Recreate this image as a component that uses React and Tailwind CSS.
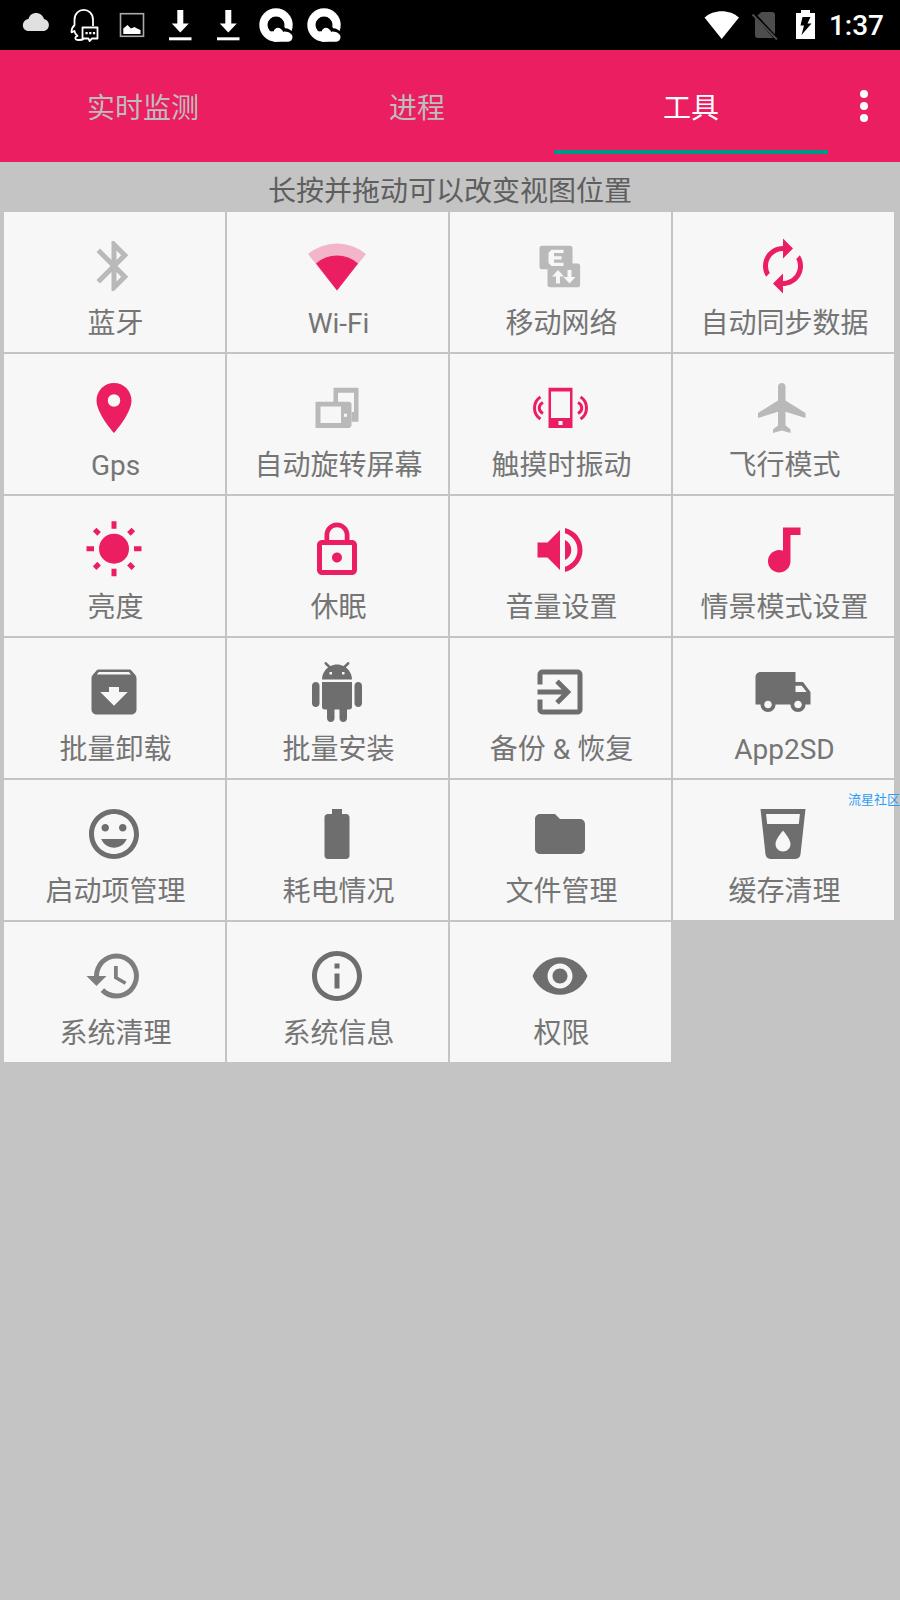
import {
  MdArchive,
  MdAudiotrack,
  MdAutorenew,
  MdBatteryFull,
  MdBluetooth,
  MdExitToApp,
  MdFolder,
  MdHistory,
  MdInfoOutline,
  MdLocalDrink,
  MdLocalShipping,
  MdLockOutline,
  MdMood,
  MdPlace,
  MdVisibility,
  MdVolumeUp,
} from "react-icons/md";

function WifiIcon({ className }) {
  return (
    <svg viewBox="0 0 60 60" fill="currentColor" className={className}>
      <path d="M30 54.5 1 18A45.3 45.3 0 0 1 59 18z" opacity="0.3" />
      <path d="M30 54.5 9 27.5A31.6 31.6 0 0 1 51 27.5z" />
    </svg>
  );
}

function MobileDataIcon({ className }) {
  return (
    <svg viewBox="0 0 60 60" fill="currentColor" className={className}>
      <rect x="9.5" y="9.7" width="33" height="23.6" rx="2.5" />
      <rect x="17.5" y="27.5" width="32.6" height="23.7" rx="2.5" />
      <g fill="#f7f7f7">
        <path d="M21.5 13.7h12v3.2H24v3.3h7.5v3.3H24v3.3h9.5v3.2h-12l-3-3V16.7z" />
        <path d="M28 34l6 6.5h-4v7h-4v-7h-4z" />
        <path d="M39.5 47.5l-6-6.5h4v-7h4v7h4z" />
      </g>
    </svg>
  );
}

function RotateIcon({ className }) {
  return (
    <svg viewBox="0 0 60 60" fill="currentColor" fillRule="evenodd" className={className}>
      <path d="M26.5 9.7h25v34h-7V34h2.5V14.7H31v10h-4.5z" />
      <path d="M8.5 23.7h34l2 1.5V48l-2 2h-34zM13.5 28.5V45H34V28.5zM37 35.8v3h3v-3z" />
    </svg>
  );
}

function VibrateIcon({ className }) {
  return (
    <svg viewBox="0 0 60 60" fill="currentColor" className={className}>
      <path fillRule="evenodd" d="M18.5 9.7h24V50h-24zM21 13.4V40h19V13.4zM28.5 43v4h4v-4z" />
      <g fill="none" stroke="currentColor" strokeWidth="3">
        <path d="M13 24.5c-5 2.5-5 8.5 0 11" />
        <path d="M10.5 19c-8 5-8 17 0 22" />
        <path d="M48 24.5c5 2.5 5 8.5 0 11" />
        <path d="M50.5 19c8 5 8 17 0 22" />
      </g>
    </svg>
  );
}

function PlaneIcon({ className }) {
  return (
    <svg viewBox="0 0 24 24" fill="currentColor" className={className}>
      <path d="M21 16v-2l-8-5V3.5c0-.83-.67-1.5-1.5-1.5S10 2.67 10 3.5V9l-8 5v2l8-2.5V19l-2 1.5V22l3.5-1 3.5 1v-1.5L13 19v-5.5l8 2.5z" />
    </svg>
  );
}

function SunIcon({ className }) {
  return (
    <svg viewBox="0 0 24 24" fill="currentColor" className={className}>
      <circle cx="12" cy="11.5" r="6" />
      <path d="M11 .5h2v3h-2zM11 19.5h2v3h-2zM1 10.5h3v2H1zM20 10.5h3v2h-3z" />
      <path d="M6.76 4.84l-1.8-1.79-1.41 1.41 1.79 1.79zM20.45 4.46l-1.41-1.41-1.79 1.79 1.41 1.41zM17.24 18.16l1.79 1.8 1.41-1.41-1.8-1.79zM3.55 18.54l1.41 1.41 1.79-1.8-1.41-1.41z" />
    </svg>
  );
}

function AndroidIcon({ className }) {
  return (
    <svg viewBox="0 0 24 24" fill="currentColor" className={className}>
      <path d="M6 18c0 .55.45 1 1 1h1v3.5c0 .83.67 1.5 1.5 1.5s1.5-.67 1.5-1.5V19h2v3.5c0 .83.67 1.5 1.5 1.5s1.5-.67 1.5-1.5V19h1c.55 0 1-.45 1-1V8H6v10zM3.5 8C2.67 8 2 8.67 2 9.5v7c0 .83.67 1.5 1.5 1.5S5 17.33 5 16.5v-7C5 8.67 4.33 8 3.5 8zm17 0c-.83 0-1.5.67-1.5 1.5v7c0 .83.67 1.5 1.5 1.5s1.5-.67 1.5-1.5v-7c0-.83-.67-1.5-1.5-1.5zm-4.97-5.84l1.3-1.3c.2-.2.2-.51 0-.71-.2-.2-.51-.2-.71 0l-1.48 1.48C13.85 1.23 12.95 1 12 1c-.96 0-1.86.23-2.66.63L7.85.15c-.2-.2-.51-.2-.71 0-.2.2-.2.51 0 .71l1.31 1.31C6.97 3.26 6 5.01 6 7h12c0-1.99-.97-3.75-2.47-4.84zM10 5H9V4h1v1zm5 0h-1V4h1v1z" />
    </svg>
  );
}

// Status bar glyphs, drawn on a 48x50 box
function StatusIcon({ children }) {
  return (
    <svg viewBox="0 0 48 50" className="w-12 h-[50px] shrink-0" fill="#fff">
      {children}
    </svg>
  );
}

function DownloadGlyph() {
  return (
    <StatusIcon>
      <path d="M21.3 10h6v13.5h5.5L24.3 32.5l-8.5-9h5.5z" />
      <path d="M13 37.3h22.5v3H13z" />
    </StatusIcon>
  );
}

function BrowserGlyph() {
  return (
    <StatusIcon>
      <circle cx="24" cy="25" r="12.6" fill="none" stroke="#fff" strokeWidth="8.2" />
      <path d="M21 28c3-5 9-4 11 2 3-.5 6 1 9 5" fill="none" stroke="#000" strokeWidth="3.5" />
      <path d="M24 41.7c-4 0-7-2-8.500-8 1.500-2 4-2.700 6-2.200 2-5 7-5 9.500.5 4-1 9.500 1 9.500 5 0 3-2 4.700-5 4.700z" />
    </StatusIcon>
  );
}

function StatusBar() {
  return (
    <div className="h-[50px] bg-black flex items-center justify-between pl-3 pr-4">
      <div className="flex items-center">
        <StatusIcon>
          <path
            fill="#e0e0e0"
            d="M17 31c-8 0-8-11-.5-12 2-8 13-8 15.5 0 7 1.5 6.5 12-1 12z"
          />
        </StatusIcon>
        <StatusIcon>
          <g fill="none" stroke="#fff" strokeWidth="1.8" strokeLinejoin="round">
            <path d="M33 26v-6C33 6.500 14.500 6.500 14.500 20v5c-2 2-3 5-3 7 1 1 2-1 3-1 0 2 2 4 3 5-3 1-3 4 1 4 2 0 4 0 5-1" />
            <path d="M22.5 27.5h15v11H32L29.5 41l-1-2.5h-6z" />
          </g>
          <path d="M25.5 32h2.2v2.2h-2.2zM29.2 32h2.2v2.2h-2.2zM32.9 32h2.2v2.2h-2.2z" />
        </StatusIcon>
        <StatusIcon>
          <rect x="12.5" y="13.7" width="23" height="22.6" fill="none" stroke="#aaa" strokeWidth="1.6" />
          <path d="M15.3 34v-5.5l4.2-3.5 3.5 3.5 3.5-1.5 2.5 1.5 3.5 1.5V34z" />
        </StatusIcon>
        <DownloadGlyph />
        <DownloadGlyph />
        <BrowserGlyph />
        <BrowserGlyph />
      </div>
      <div className="flex items-center">
        <svg viewBox="0 0 36 50" className="w-9 h-[50px]" fill="#fff">
          <path d="M18.7 39 1.5 17.5C10.500 9 27 9 36 17.500z" />
        </svg>
        <svg viewBox="0 0 48 50" className="w-12 h-[50px]">
          <path fill="#4d4d4d" d="M22.5 12H33q3 0 3 3v19.500L18.500 15.500zM16 18l18.500 20H18.500q-2.500 0-2.500-3z" />
          <path stroke="#4d4d4d" strokeWidth="2" d="M13.5 14.5 38 39.5" />
        </svg>
        <svg viewBox="0 0 36 50" className="w-9 h-[50px]">
          <path fill="#fff" d="M14 10h9v3h5v26H9V13h5z" />
          <path d="M15.5 17h8l-3 6.5h4L14.5 35l2.5-9.5h-3.5z" />
        </svg>
        <span className="pt-0.5 pl-1.5 text-[28px] leading-[50px] font-medium text-white">1:37</span>
      </div>
    </div>
  );
}

const tabs = ["实时监测", "进程", "工具"];

function TabBar() {
  return (
    <nav className="h-28 bg-[#eb1e62] flex pl-1.5">
      <div role="tablist" className="flex flex-1">
        {tabs.map((tab) => {
          const active = tab === "工具";
          return (
            <button
              key={tab}
              type="button"
              role="tab"
              aria-selected={active}
              className={`flex-1 pt-[18px] mb-2 border-b-4 text-[28px] leading-9 ${
                active ? "border-[#009688] text-white" : "border-transparent text-[#bdbdbd]"
              }`}
            >
              {tab}
            </button>
          );
        })}
      </div>
      <button type="button" aria-label="更多" className="w-[72px] flex flex-col items-center justify-center gap-1">
        <span className="size-2 rounded-full bg-white" />
        <span className="size-2 rounded-full bg-white" />
        <span className="size-2 rounded-full bg-white" />
      </button>
    </nav>
  );
}

const off = "text-[#b9b9b9]";
const on = "text-[#eb1e62]";
const plain = "text-[#6e6e6e]";

const tools = [
  { label: "蓝牙", icon: MdBluetooth, color: off },
  { label: "Wi-Fi", icon: WifiIcon, color: on },
  { label: "移动网络", icon: MobileDataIcon, color: off },
  { label: "自动同步数据", icon: MdAutorenew, color: on },
  { label: "Gps", icon: MdPlace, color: on },
  { label: "自动旋转屏幕", icon: RotateIcon, color: off },
  { label: "触摸时振动", icon: VibrateIcon, color: on },
  { label: "飞行模式", icon: PlaneIcon, color: off },
  { label: "亮度", icon: SunIcon, color: on },
  { label: "休眠", icon: MdLockOutline, color: on },
  { label: "音量设置", icon: MdVolumeUp, color: on },
  { label: "情景模式设置", icon: MdAudiotrack, color: on },
  { label: "批量卸载", icon: MdArchive, color: plain },
  { label: "批量安装", icon: AndroidIcon, color: plain },
  { label: "备份 & 恢复", icon: MdExitToApp, color: plain },
  { label: "App2SD", icon: MdLocalShipping, color: plain },
  { label: "启动项管理", icon: MdMood, color: plain },
  { label: "耗电情况", icon: MdBatteryFull, color: plain },
  { label: "文件管理", icon: MdFolder, color: plain },
  { label: "缓存清理", icon: MdLocalDrink, color: plain },
  { label: "系统清理", icon: MdHistory, color: "text-[#7e7e7e]" },
  { label: "系统信息", icon: MdInfoOutline, color: plain },
  { label: "权限", icon: MdVisibility, color: plain },
];

function ToolTile({ label, icon: Icon, color }) {
  return (
    <button type="button" className="bg-[#f7f7f7] flex flex-col items-center gap-2.5 pt-6 pr-0.5 pb-2.5">
      <Icon className={`size-[60px] ${color}`} />
      <span className="pl-1 text-[28px] leading-9 whitespace-nowrap text-[#757575]">{label}</span>
    </button>
  );
}

export default function App() {
  return (
    <div className="relative min-h-screen overflow-hidden bg-[#c4c4c4] font-[Roboto,'Noto_Sans_CJK_SC',sans-serif]">
      <StatusBar />
      <TabBar />
      <main>
        <p className="pt-3 pb-0.5 text-center text-[28px] leading-9 text-[#5e5e5e]">
          长按并拖动可以改变视图位置
        </p>
        <div className="grid grid-cols-4 gap-0.5 pl-1 pr-1.5">
          {tools.map((tool) => (
            <ToolTile key={tool.label} {...tool} />
          ))}
        </div>
      </main>

      {/* Watermark over the right edge */}
      <span className="absolute right-0 top-[790px] text-[13px] leading-5 whitespace-nowrap text-[#2f9df4]">
        流星社区
      </span>
    </div>
  );
}
